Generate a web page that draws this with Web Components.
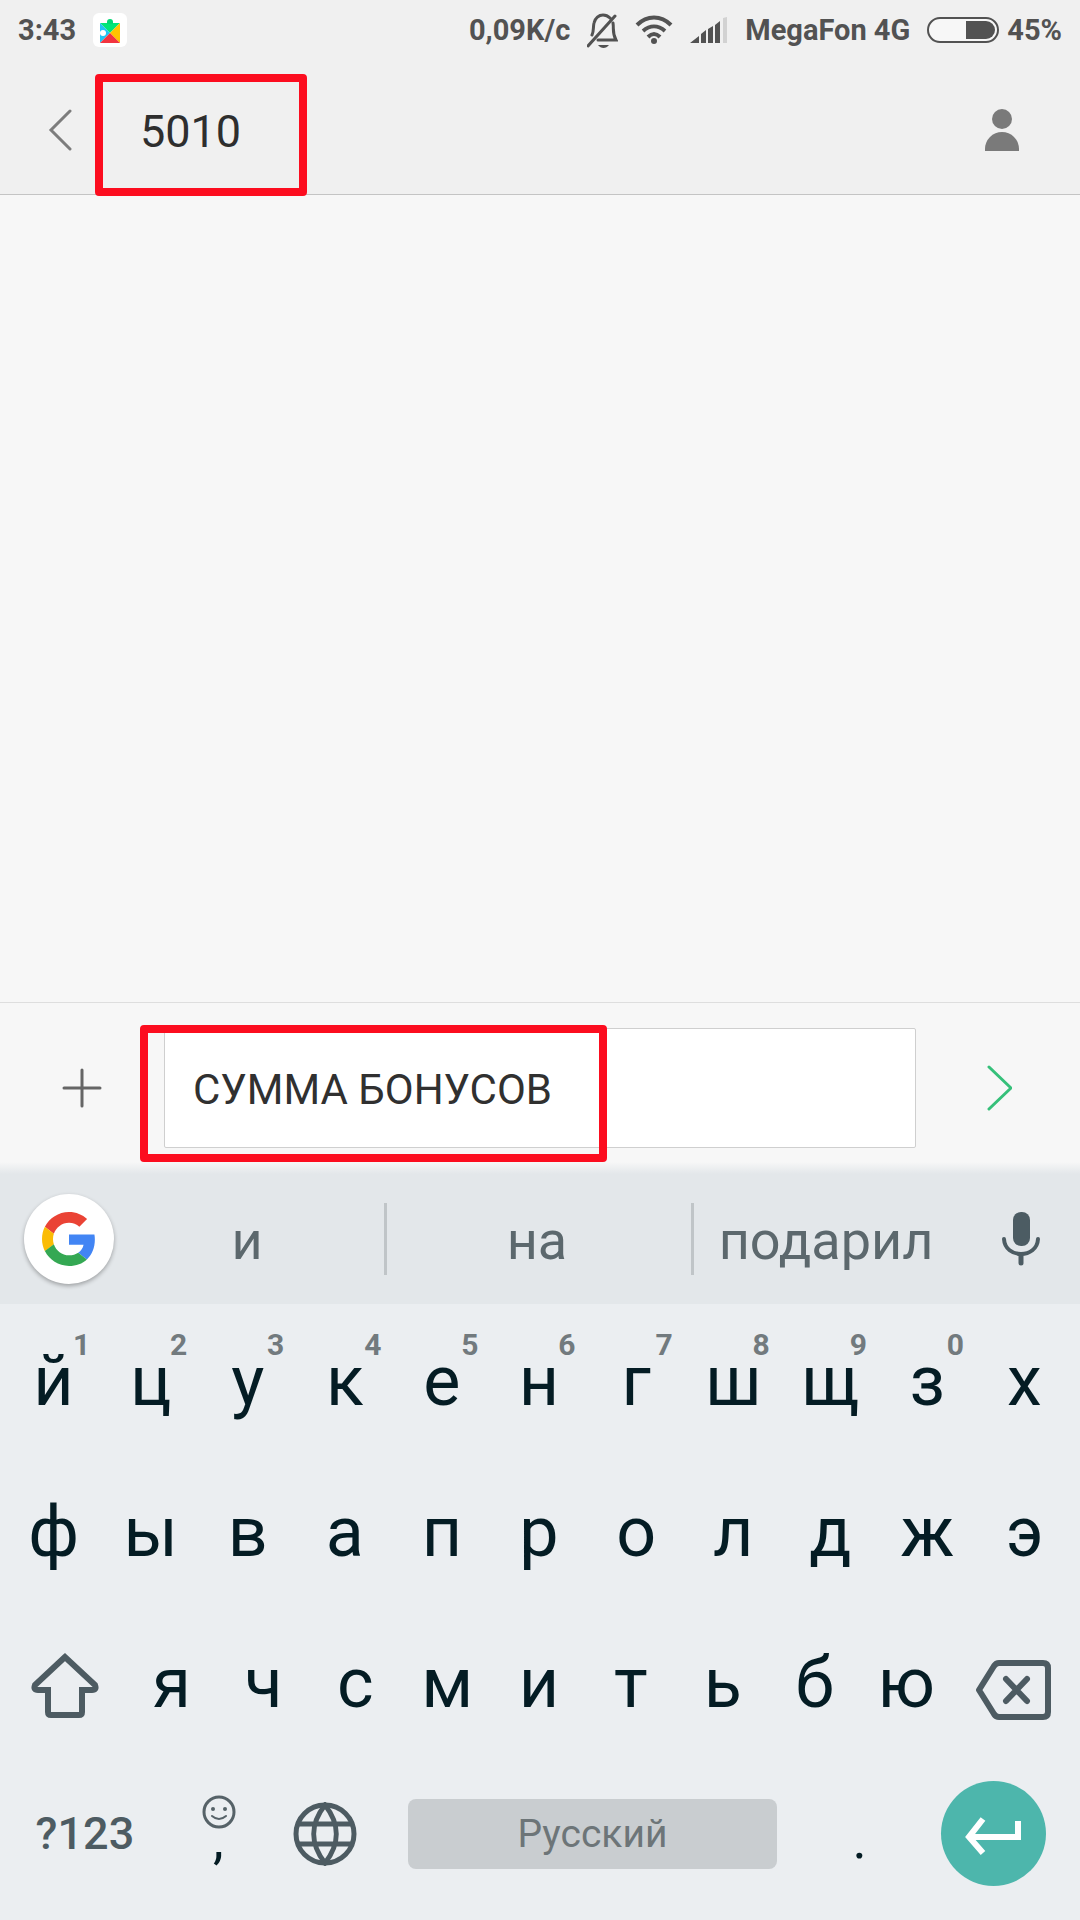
<!DOCTYPE html>
<html lang="ru">
  <head>
    <meta charset="UTF-8" />
    <meta name="viewport" content="width=device-width, initial-scale=1.0" />
    <title>5010</title>
    <style>
      body {
        margin: 0;
        font-family: Roboto, "Noto Sans", sans-serif;
      }
    </style>
  </head>
  <body>
    <sms-screen>
      <status-bar slot="top"></status-bar>
      <chat-header slot="top">5010</chat-header>
      <message-composer slot="bottom" text="СУММА БОНУСОВ"></message-composer>
      <suggestion-strip slot="bottom" words="и на подарил"></suggestion-strip>
      <soft-keyboard slot="bottom"></soft-keyboard>
    </sms-screen>

    <template id="sms-screen">
      <style>
        :host {
          display: flex;
          flex-direction: column;
          min-height: 100vh;
          background: #f7f7f7;
        }
        main {
          flex: 1;
        }
      </style>
      <slot name="top"></slot>
      <main></main>
      <slot name="bottom"></slot>
    </template>

    <template id="status-bar">
      <style>
        :host {
          display: flex;
          align-items: center;
          justify-content: space-between;
          height: 60px;
          padding: 0 18px 2px;
          background: #f0f0f0;
          color: #525252;
          font-size: 29px;
          font-weight: 700;
          white-space: nowrap;
        }
        div {
          display: flex;
          align-items: center;
          gap: 17px;
        }
        .power {
          gap: 8px;
        }
        svg {
          display: block;
        }
      </style>
      <div>
        <span>3:43</span>
        <svg width="34" height="34" viewBox="0 0 34 34">
          <rect width="34" height="34" rx="6" fill="#fff" />
          <path d="M7 10h20L17 20z" fill="#00e676" />
          <path d="M14 11V9a3 3 0 1 1 6 0v2z" fill="#00d873" />
          <path d="M7 10v20l10-10z" fill="#20c4f4" />
          <path d="M27 10v20L17 20z" fill="#ffc400" />
          <path d="M7 30h20L17 20z" fill="#f2343f" />
          <circle cx="10" cy="20" r="3" fill="#fff" />
        </svg>
      </div>
      <div>
        <span>0,09K/c</span>
        <svg width="31" height="38" viewBox="0 0 31 38" fill="none" stroke="currentColor" stroke-width="3">
          <path d="M5 24c2-4 1-8 2-12 1-5 5-8 9-8 3 0 5 1 7 3M26 12c1 6-1 10 3 17H11M1 35L28 5" stroke-linecap="round" />
          <path d="M11 34h11c-3 4-8 4-11 0z" fill="currentColor" stroke="none" />
        </svg>
        <svg width="38" height="30" viewBox="0 0 38 30" fill="none" stroke="currentColor" stroke-width="4">
          <path d="M2 10c10-10 24-10 34 0M8 16c7-6 15-6 22 0M13 22c4-4 8-4 12 0" />
          <circle cx="19" cy="26" r="3" fill="currentColor" stroke="none" />
        </svg>
        <svg width="38" height="26" viewBox="0 0 38 26" fill="currentColor">
          <path d="M0 26l9-7v7zM11 17l5-4v13h-5zM18 12l5-3v17h-5zM25 8l5-4v22h-5z" />
          <path d="M33 1l4-1v26h-4z" fill="#d2d2d2" />
        </svg>
        <span>MegaFon 4G</span>
        <div class="power">
          <svg width="72" height="26" viewBox="0 0 72 26">
            <rect x="1" y="1" width="70" height="24" rx="12" fill="#f7f7f7" stroke="currentColor" stroke-width="2" />
            <path d="M39 4h20a9 9 0 0 1 0 18H39z" fill="currentColor" />
          </svg>
          <span>45%</span>
        </div>
      </div>
    </template>

    <template id="chat-header">
      <style>
        :host {
          display: flex;
          align-items: center;
          position: relative;
          height: 132px;
          background: #f0f0f0;
          border-bottom: 1px solid #c4c4c4;
        }
        button {
          display: flex;
          align-items: center;
          justify-content: center;
          align-self: stretch;
          width: 120px;
          border: 0;
          padding: 4px 0 0;
          background: none;
        }
        h1 {
          flex: 1;
          margin: 0;
          padding: 6px 0 0 20px;
          color: #2e2e2e;
          font-size: 45px;
          font-weight: 400;
        }
        .contact {
          width: 156px;
        }
        highlight-box {
          top: 12px;
          left: 95px;
          width: 212px;
          height: 122px;
        }
      </style>
      <button aria-label="Назад">
        <svg width="24" height="42" viewBox="0 0 24 42" fill="none" stroke="#7c7c7c" stroke-width="3" stroke-linecap="round">
          <path d="M22 2L3 21l19 19" />
        </svg>
      </button>
      <h1><slot></slot></h1>
      <button class="contact" aria-label="Контакт">
        <svg width="34" height="42" viewBox="0 0 34 42" fill="#7a7a7a">
          <circle cx="17" cy="10" r="10" />
          <path d="M0 42v-2a17 17 0 0 1 34 0v2z" />
        </svg>
      </button>
      <highlight-box></highlight-box>
    </template>

    <template id="highlight-box">
      <style>
        :host {
          position: absolute;
          z-index: 1;
          box-sizing: border-box;
          border: 8px solid #fc0d1f;
          border-radius: 4px;
          pointer-events: none;
        }
      </style>
    </template>

    <template id="message-composer">
      <style>
        :host {
          display: flex;
          align-items: center;
          padding: 25px 0 14px;
          border-top: 1px solid #dedede;
        }
        button {
          display: flex;
          align-items: center;
          justify-content: center;
          width: 164px;
          height: 120px;
          border: 0;
          padding: 0;
          background: none;
        }
        .field {
          position: relative;
          flex: 1;
        }
        input {
          display: block;
          box-sizing: border-box;
          width: 100%;
          height: 120px;
          padding: 2px 28px 0;
          border: 1px solid #cfcfcf;
          border-radius: 2px;
          background: #fff;
          color: #303030;
          font: inherit;
          font-size: 42px;
        }
        highlight-box {
          top: -3px;
          left: -24px;
          width: 467px;
          height: 137px;
        }
      </style>
      <button aria-label="Добавить">
        <svg width="40" height="40" viewBox="0 0 40 40" fill="none" stroke="#666" stroke-width="3" stroke-linecap="round">
          <path d="M20 2v36M2 20h36" />
        </svg>
      </button>
      <div class="field">
        <input type="text" aria-label="Сообщение" />
        <highlight-box></highlight-box>
      </div>
      <button aria-label="Отправить">
        <svg width="28" height="48" viewBox="0 0 28 48" fill="none" stroke="#36c07a" stroke-width="3" stroke-linecap="round">
          <path d="M5 3l22 21L5 45" />
        </svg>
      </button>
    </template>

    <template id="suggestion-strip">
      <style>
        :host {
          display: flex;
          align-items: center;
          height: 130px;
          padding-top: 12px;
          background: linear-gradient(#f7f7f7, #e3e7ea 12px);
        }
        button {
          border: 0;
          padding: 0;
          background: none;
          font: inherit;
        }
        .google,
        .mic {
          display: flex;
          align-items: center;
          justify-content: center;
        }
        .google {
          width: 90px;
          height: 90px;
          margin-left: 24px;
          border-radius: 50%;
          background: #fff;
          box-shadow: 0 2px 4px rgba(0, 0, 0, 0.3);
        }
        .words {
          display: grid;
          flex: 1;
          grid-template-columns: 270fr 307fr 271fr;
        }
        .words button {
          height: 72px;
          padding: 4px 4px 0 0;
          color: #5c686d;
          font-size: 54px;
          line-height: 68px;
        }
        .words button + button {
          border-left: 3px solid #c0c5c8;
        }
        .mic {
          width: 118px;
          height: 100px;
        }
      </style>
      <button class="google" aria-label="Google">
        <svg width="54" height="54" viewBox="0 0 48 48">
          <path fill="#ea4335" d="M24 9.5c3.54 0 6.71 1.22 9.21 3.6l6.85-6.85C35.9 2.38 30.47 0 24 0 14.62 0 6.51 5.38 2.56 13.22l7.98 6.19C12.43 13.72 17.74 9.5 24 9.5z" />
          <path fill="#4285f4" d="M46.98 24.55c0-1.57-.15-3.09-.38-4.55H24v9.02h12.94c-.58 2.96-2.26 5.48-4.78 7.18l7.73 6c4.51-4.18 7.09-10.36 7.09-17.65z" />
          <path fill="#fbbc05" d="M10.53 28.59c-.48-1.45-.76-2.99-.76-4.59s.27-3.14.76-4.59l-7.98-6.19C.92 16.46 0 20.12 0 24c0 3.88.92 7.54 2.56 10.78l7.97-6.19z" />
          <path fill="#34a853" d="M24 48c6.48 0 11.93-2.13 15.89-5.81l-7.73-6c-2.15 1.45-4.92 2.3-8.16 2.3-6.26 0-11.57-4.22-13.47-9.91l-7.98 6.19C6.51 42.62 14.62 48 24 48z" />
        </svg>
      </button>
      <div class="words"></div>
      <button class="mic" aria-label="Голосовой ввод">
        <svg width="40" height="54" viewBox="0 0 40 54" fill="none" stroke="#4c5c63" stroke-linecap="round">
          <rect x="12" y="0" width="17" height="34" rx="8" fill="#4c5c63" stroke="none" />
          <path d="M3 27c1 20 33 20 34 0" stroke-width="4" />
          <path d="M20 43v8" stroke-width="5" />
        </svg>
      </button>
    </template>

    <template id="key-button">
      <style>
        :host {
          display: block;
          position: relative;
          flex: 1 1 0;
          min-width: 0;
        }
        button {
          display: flex;
          align-items: center;
          justify-content: center;
          width: 100%;
          height: 100%;
          border: 0;
          padding: 0;
          background: none;
          color: #041c24;
          font: inherit;
          font-size: 70px;
        }
        small {
          position: absolute;
          top: 22px;
          right: 12px;
          color: #727a7e;
          font-size: 30px;
          font-weight: 700;
        }
        :host([kind="symbols"]) button {
          color: #4d5b62;
          font-size: 45px;
          font-weight: 500;
        }
        :host([kind="mark"]) button {
          padding-top: 12px;
          font-size: 54px;
        }
        :host([kind="space"]) {
          padding: 0 29px;
        }
        :host([kind="space"]) button {
          height: 70px;
          border-radius: 8px;
          background: #c9cdd0;
          color: #6d7578;
          font-size: 39px;
        }
        :host([kind="enter"]) button {
          width: 105px;
          height: 105px;
          border-radius: 50%;
          background: #4db6ac;
        }
        :host([kind="space"]),
        :host([kind="enter"]) {
          display: flex;
          align-items: center;
          justify-content: center;
        }
        ::slotted(svg) {
          display: block;
        }
        ::slotted(svg[slot="badge"]) {
          position: absolute;
          top: 37px;
          left: calc(50% - 16px);
        }
      </style>
      <button><slot></slot></button>
      <slot name="badge"></slot>
    </template>

    <template id="soft-keyboard">
      <style>
        :host {
          display: block;
          padding: 1px 7px 11px 5px;
          background: #ebeef1;
        }
        .row {
          display: flex;
          height: 151px;
        }
        .shift {
          flex-grow: 121;
        }
        .letter {
          flex-grow: 92;
        }
        .delete {
          flex-grow: 121;
        }
        .symbols {
          flex-grow: 160;
        }
        .mark {
          flex-grow: 107;
        }
        .space {
          flex-grow: 370;
        }
        .enter {
          flex-grow: 160;
        }
      </style>
      <div class="row" data-keys="йцукенгшщзх" data-hints="1234567890"></div>
      <div class="row" data-keys="фывапролджэ"></div>
      <div class="row" data-keys="ячсмитьбю">
        <key-button class="shift" label="Shift">
          <svg width="68" height="72" viewBox="0 0 68 72" fill="none" stroke="#4d5b62" stroke-width="6">
            <path d="M34 10L4 38q-2 5 3 5h10v22q0 3 3 3h28q3 0 3-3V43h10q5 0 3-5z" />
          </svg>
        </key-button>
        <key-button class="delete" label="Удалить">
          <svg width="76" height="76" viewBox="0 0 76 76" fill="none" stroke="#4d5b62" stroke-width="6" stroke-linejoin="round">
            <path d="M24 18h44q5 0 5 5v44q0 5-5 5H24q-3 0-5-3L4 45l15-24q2-3 5-3z" />
            <path d="M31 34l21 22M52 34L31 56" stroke-linecap="round" />
          </svg>
        </key-button>
      </div>
      <div class="row">
        <key-button class="symbols" kind="symbols">?123</key-button>
        <key-button class="mark" kind="mark">,
          <svg slot="badge" width="34" height="34" viewBox="0 0 34 34" fill="none" stroke="#566268" stroke-width="3">
            <circle cx="17" cy="17" r="15" />
            <path d="M10 21q7 6 14 0" stroke-width="2" stroke-linecap="round" />
            <g fill="#566268" stroke="none">
              <circle cx="11" cy="14" r="2" />
              <circle cx="23" cy="14" r="2" />
            </g>
          </svg>
        </key-button>
        <key-button class="mark" label="Язык">
          <svg width="64" height="64" viewBox="0 0 64 64" fill="none" stroke="#4d5b62" stroke-width="5">
            <circle cx="32" cy="32" r="29" />
            <path d="M32 3C17 22 17 42 32 61C47 42 47 22 32 3zM6 22h52M6 42h52" />
          </svg>
        </key-button>
        <key-button class="space" kind="space">Русский</key-button>
        <key-button class="mark" kind="mark">.</key-button>
        <key-button class="enter" kind="enter" label="Ввод">
          <svg width="58" height="42" viewBox="0 0 58 42" fill="none" stroke="#fff" stroke-width="6">
            <path d="M19 6L5 24l14 16M5 24h49V8" />
          </svg>
        </key-button>
      </div>
    </template>

    <script>
      // Every element clones the template that has its tag name as id.
      class TemplateElement extends HTMLElement {
        constructor() {
          super();
          this.attachShadow({ mode: "open" });
          const template = document.getElementById(this.localName);
          this.shadowRoot.appendChild(template.content.cloneNode(true));
        }
      }

      class SmsScreen extends TemplateElement {}
      class StatusBar extends TemplateElement {}
      class ChatHeader extends TemplateElement {}
      class HighlightBox extends TemplateElement {}

      class MessageComposer extends TemplateElement {
        connectedCallback() {
          this.shadowRoot.querySelector("input").value = this.getAttribute("text");
        }
      }

      class SuggestionStrip extends TemplateElement {
        connectedCallback() {
          const words = this.shadowRoot.querySelector(".words");
          for (const word of this.getAttribute("words").split(" ")) {
            const button = document.createElement("button");
            button.textContent = word;
            words.appendChild(button);
          }
        }
      }

      class KeyButton extends TemplateElement {
        connectedCallback() {
          const button = this.shadowRoot.querySelector("button");
          if (this.hasAttribute("label")) {
            button.setAttribute("aria-label", this.getAttribute("label"));
          }
          if (this.hasAttribute("hint")) {
            const hint = document.createElement("small");
            hint.textContent = this.getAttribute("hint");
            this.shadowRoot.appendChild(hint);
          }
        }
      }

      class SoftKeyboard extends TemplateElement {
        connectedCallback() {
          this.shadowRoot.querySelectorAll("[data-keys]").forEach((row) => {
            const hints = row.dataset.hints || "";
            const last = row.querySelector(".delete");
            [...row.dataset.keys].forEach((letter, i) => {
              const key = document.createElement("key-button");
              key.className = "letter";
              key.textContent = letter;
              if (hints[i]) key.setAttribute("hint", hints[i]);
              row.insertBefore(key, last);
            });
          });
        }
      }

      customElements.define("highlight-box", HighlightBox);
      customElements.define("key-button", KeyButton);
      customElements.define("status-bar", StatusBar);
      customElements.define("chat-header", ChatHeader);
      customElements.define("message-composer", MessageComposer);
      customElements.define("suggestion-strip", SuggestionStrip);
      customElements.define("soft-keyboard", SoftKeyboard);
      customElements.define("sms-screen", SmsScreen);
    </script>
  </body>
</html>
